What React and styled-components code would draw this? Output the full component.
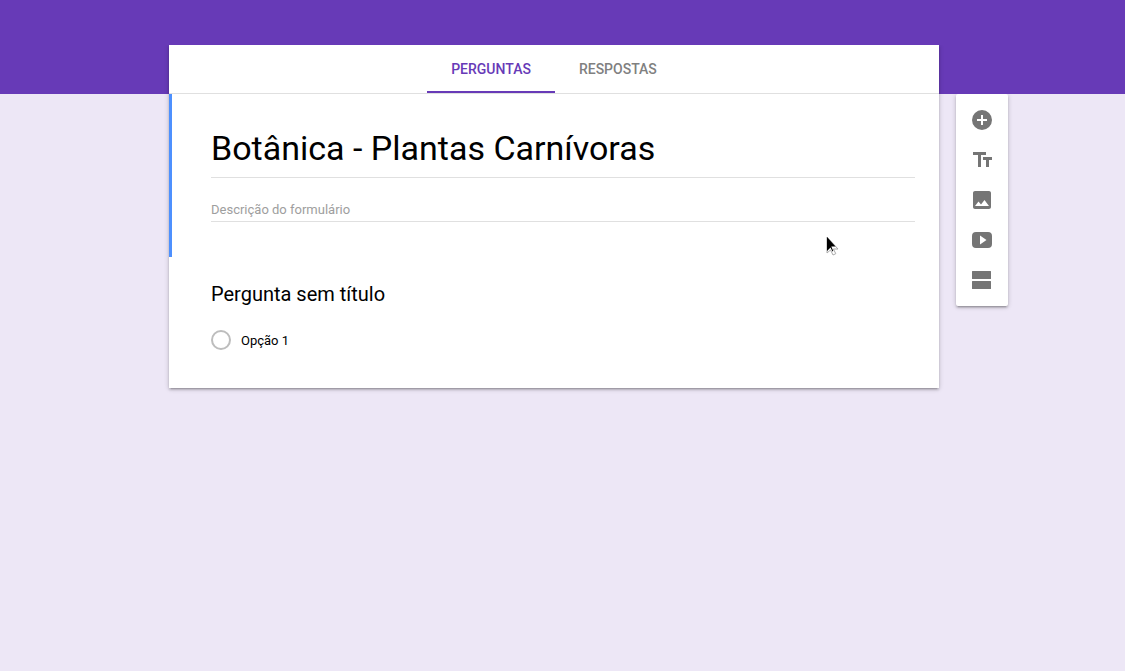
import React, { useState } from "react";
import styled, { createGlobalStyle } from "styled-components";

const elevation =
  "0 2px 2px 0 rgba(0, 0, 0, 0.14), 0 3px 1px -2px rgba(0, 0, 0, 0.12), 0 1px 5px 0 rgba(0, 0, 0, 0.2)";

const GlobalStyle = createGlobalStyle`
  *, *::before, *::after { box-sizing: border-box; }
  body {
    min-height: 100vh;
    margin: 0;
    background: #ede7f6;
    color: #000;
    font-family: Roboto, "Liberation Sans", sans-serif;
  }
  button, input { font: inherit; }
`;

const Banner = styled.header`
  height: 94px;
  background: #673ab7;
`;

const Workspace = styled.main`
  display: grid;
  grid-template-columns: 1fr minmax(0, 770px) 1fr;
  column-gap: 17px;
  align-items: start;
  margin-top: -49px;
  padding-right: 17px;
`;

const Card = styled.form`
  position: relative;
  grid-column: 2;
  background: #fff;
  box-shadow: ${elevation};
  clip-path: inset(0 -8px -8px -8px);
`;

const Tabs = styled.div`
  display: flex;
  justify-content: center;
  height: 49px;
  border-bottom: 1px solid #e0e0e0;
`;

const Tab = styled.button`
  padding: 2px 24px 0;
  border: 0;
  border-bottom: 2px solid ${(p) => (p.$active ? "#673ab7" : "transparent")};
  background: none;
  color: ${(p) => (p.$active ? "#673ab7" : "#808080")};
  font-size: 14px;
  font-weight: 500;
  line-height: 20px;
  cursor: pointer;
`;

const FormHeader = styled.section`
  display: flex;
  flex-direction: column;
  gap: 23px;
  padding: 34px 24px 35px 39px;
  border-left: 3px solid #4d90fe;
`;

const TextField = styled.input`
  width: 100%;
  padding: 0;
  border: 0;
  border-bottom: 1px solid #e0e0e0;
  border-radius: 0;
  outline: 0;
  background: none;
  color: #000;
  &::placeholder { color: #9e9e9e; opacity: 1; }
`;

const TitleField = styled(TextField)`
  height: 50px;
  padding-bottom: 9px;
  font-size: 34px;
  line-height: 40px;
`;

const DescriptionField = styled(TextField)`
  height: 21px;
  padding-bottom: 3px;
  font-size: 13px;
  line-height: 16px;
`;

const Question = styled.fieldset`
  margin: 0;
  padding: 25px 24px 38px 42px;
  border: 0;
`;

const QuestionTitle = styled.legend`
  float: left;
  width: 100%;
  margin-bottom: 24px;
  padding: 0;
  font-size: 20px;
  line-height: 24px;
`;

const Option = styled.label`
  display: flex;
  align-items: center;
  gap: 10px;
  clear: both;
  height: 20px;
  font-size: 13px;
  line-height: 20px;
`;

const Radio = styled.input`
  appearance: none;
  width: 20px;
  height: 20px;
  margin: 0;
  border: 2px solid #bdbdbd;
  border-radius: 50%;
  &:checked {
    border-color: #673ab7;
    background: radial-gradient(#673ab7 5px, transparent 6px);
  }
`;

const OptionText = styled.span`
  padding-top: 2px;
`;

const Toolbar = styled.div`
  grid-column: 3;
  justify-self: start;
  display: flex;
  flex-direction: column;
  width: 52px;
  margin-top: 49px;
  padding: 6px;
  border-radius: 2px;
  background: #fff;
  box-shadow: ${elevation};
  clip-path: inset(0 -8px -8px -8px);
`;

const ToolButton = styled.button`
  display: flex;
  align-items: center;
  justify-content: center;
  height: 40px;
  padding: 0;
  border: 0;
  background: none;
  color: #757575;
  cursor: pointer;
`;

const Pointer = styled.svg`
  position: absolute;
  left: 657px;
  top: 191px;
  pointer-events: none;
`;

const tools = [
  {
    label: "Adicionar pergunta",
    path: "M12 2a10 10 0 1 0 0 20 10 10 0 0 0 0-20zm5 11h-4v4h-2v-4H7v-2h4V7h2v4h4z",
  },
  {
    label: "Adicionar título e descrição",
    path: "M3 4v3h5v12h3V7h5V4zm19 5h-9v3h3v7h3v-7h3z",
  },
  {
    label: "Adicionar imagem",
    path: "M21 19V5c0-1.100-.9-2-2-2H5c-1.100 0-2 .9-2 2v14c0 1.100.9 2 2 2h14c1.100 0 2-.9 2-2zM8.500 13.500l2.500 3.010L14.500 12l4.500 6H5z",
  },
  {
    label: "Adicionar vídeo",
    path: "M6 4h12q4 0 4 4v8q0 4-4 4H6q-4 0-4-4V8q0-4 4-4zm4 3.500v9l6.500-4.500z",
  },
  {
    label: "Adicionar seção",
    path: "M2.500 3h18q.5 0 .5.5v7q0 .5-.5.5h-18q-.5 0-.5-.5v-7q0-.5.5-.5zM2.500 13h18q.5 0 .5.5v7q0 .5-.5.5h-18q-.5 0-.5-.5v-7q0-.5.5-.5z",
  },
];

export default function App() {
  const [tab, setTab] = useState("Perguntas");
  const [title, setTitle] = useState("Botânica - Plantas Carnívoras");

  return (
    <>
      <GlobalStyle />
      <Banner />
      <Workspace>
        <Card>
          <Tabs role="tablist">
            {["Perguntas", "Respostas"].map((name) => (
              <Tab
                key={name}
                type="button"
                role="tab"
                aria-selected={tab === name}
                $active={tab === name}
                onClick={() => setTab(name)}
              >
                {name.toUpperCase()}
              </Tab>
            ))}
          </Tabs>
          <FormHeader>
            <TitleField
              aria-label="Título do formulário"
              value={title}
              onChange={(e) => setTitle(e.target.value)}
            />
            <DescriptionField
              aria-label="Descrição do formulário"
              placeholder="Descrição do formulário"
            />
          </FormHeader>
          <Question>
            <QuestionTitle>Pergunta sem título</QuestionTitle>
            <Option>
              <Radio type="radio" name="question" />
              <OptionText>Opção 1</OptionText>
            </Option>
          </Question>
          <Pointer width="14" height="20" viewBox="0 0 14 20" aria-hidden="true">
            <path
              d="M1 1v16l3.500-3 2.500 5 2.800-1.300-2.400-4.700h4.600z"
              fill="#fff"
              stroke="#aaa"
              strokeWidth="1"
            />
            <path d="M1 1v14l3.500-3.500 2 4 .8-.4-2-4.600h4.200z" fill="#000" />
          </Pointer>
        </Card>
        <Toolbar role="toolbar" aria-label="Ferramentas do formulário">
          {tools.map((tool) => (
            <ToolButton key={tool.label} type="button" aria-label={tool.label}>
              <svg width="24" height="24" viewBox="0 0 24 24" aria-hidden="true">
                <path d={tool.path} fill="currentColor" fillRule="evenodd" />
              </svg>
            </ToolButton>
          ))}
        </Toolbar>
      </Workspace>
    </>
  );
}
